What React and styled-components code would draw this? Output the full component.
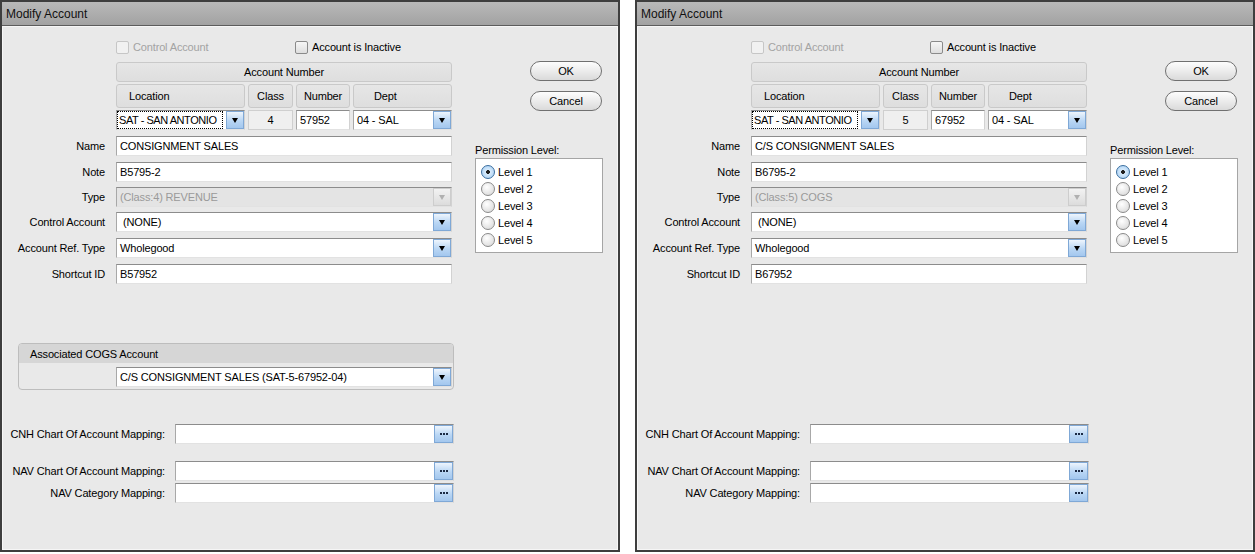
import React from "react";
import styled, { createGlobalStyle } from "styled-components";

const GlobalStyle = createGlobalStyle`
  html, body {
    margin: 0;
    padding: 0;
    background: #ffffff;
  }
  body {
    font-family: "Liberation Sans", Arial, sans-serif;
    font-size: 11px;
    letter-spacing: -0.15px;
    color: #000000;
  }
`;

const Page = styled.div`
  display: flex;
  gap: 15px;
  width: 1255px;
  height: 554px;
`;

const Window = styled.div`
  width: 620px;
  height: 552px;
  box-sizing: border-box;
  border: 2px solid #3e3e3e;
  display: flex;
  flex-direction: column;
  background: #e9e9e9;
`;

const TitleBar = styled.div`
  height: 23px;
  border-bottom: 1px solid #5c5c5c;
  background: linear-gradient(#b9b9b9, #a2a2a2);
  display: flex;
  align-items: center;
  padding-left: 4px;
  font-size: 12px;
  letter-spacing: 0;
  color: #111111;
`;

const Body = styled.div`
  flex: 1;
  display: flex;
  flex-direction: column;
  padding-top: 14px;
  box-shadow: inset 1px 1px 0 #f6f6f6, inset -1px -1px 0 #f6f6f6;
`;

const TopArea = styled.div`
  display: flex;
  align-items: flex-start;
`;

const FormCol = styled.div`
  display: flex;
  flex-direction: column;
  width: 450px;
`;

const FieldRow = styled.div`
  display: grid;
  grid-template-columns: 103px 336px;
  column-gap: 11px;
  align-items: center;
  margin-top: ${(p) => p.$gap || 0}px;
`;

const Label = styled.div`
  text-align: right;
  white-space: nowrap;
`;

const CheckGroup = styled.div`
  display: flex;
  align-items: center;
  height: 14px;
`;

const CheckItem = styled.div`
  display: flex;
  align-items: center;
  gap: 4px;
  width: ${(p) => (p.$width ? `${p.$width}px` : "auto")};
  color: ${(p) => (p.$disabled ? "#a3a3a3" : "#000000")};
`;

const CheckBox = styled.span`
  width: 11px;
  height: 11px;
  border: 1px solid ${(p) => (p.$disabled ? "#c6c6c6" : "#8a8a8a")};
  border-radius: 2px;
  background: ${(p) =>
    p.$disabled ? "#f1f1f1" : "linear-gradient(#f6f6f6, #dedede)"};
`;

const HeaderGrid = styled.div`
  display: grid;
  grid-template-columns: 129px 45px 54px 1fr;
  column-gap: 3px;
`;

const HeaderCell = styled.div`
  height: ${(p) => p.$h || 24}px;
  box-sizing: border-box;
  border: 1px solid #c9c9c9;
  border-radius: 3px;
  background: linear-gradient(#e6e6e6, #dedede);
  display: flex;
  align-items: center;
  justify-content: ${(p) => (p.$left ? "flex-start" : "center")};
  padding-left: ${(p) => p.$left || 0}px;
`;

const Box = styled.div`
  height: 20px;
  box-sizing: border-box;
  border: 1px solid;
  border-color: #8c8c8c #d2d2d2 #e2e2e2 #a8a8a8;
  background: ${(p) => (p.$disabled ? "#e4e4e4" : "#ffffff")};
  color: ${(p) => (p.$disabled ? "#9a9a9a" : "#000000")};
  display: flex;
  align-items: stretch;
`;

const BoxText = styled.div`
  flex: 1;
  display: flex;
  align-items: center;
  padding-left: ${(p) => (p.$indent != null ? p.$indent : 3)}px;
  white-space: nowrap;
  overflow: hidden;
`;

const FocusText = styled.div`
  flex: 1;
  display: flex;
  align-items: center;
  padding-left: 1px;
  margin-right: 3px;
  border: 1px dotted #000000;
  white-space: nowrap;
  overflow: hidden;
  letter-spacing: -0.45px;
`;

const ClassCell = styled.div`
  height: 20px;
  box-sizing: border-box;
  border: 1px solid #cfcfcf;
  background: #efefef;
  display: flex;
  align-items: center;
  justify-content: center;
`;

const DropBtn = styled.div`
  width: 18px;
  box-sizing: border-box;
  border: 1px solid ${(p) => (p.$disabled ? "#cdcdcd" : "#7fa8d6")};
  background: ${(p) =>
    p.$disabled
      ? "linear-gradient(#f2f2f2, #dcdcdc)"
      : "linear-gradient(#eef5fd, #b9d6f4 55%, #a3c7ee)"};
  display: flex;
  align-items: center;
  justify-content: center;
  &::after {
    content: "";
    width: 0;
    height: 0;
    border-left: 3.5px solid transparent;
    border-right: 3.5px solid transparent;
    border-top: 5px solid ${(p) => (p.$disabled ? "#b0b0b0" : "#000000")};
  }
`;

const DotsBtn = styled.div`
  width: 19px;
  box-sizing: border-box;
  border: 1px solid #7fa8d6;
  background: linear-gradient(#eef5fd, #b9d6f4 55%, #a3c7ee);
  display: flex;
  align-items: center;
  justify-content: center;
  gap: 1px;
`;

const Dot = styled.span`
  width: 2px;
  height: 2px;
  background: #1b2a44;
`;

const SideCol = styled.div`
  display: flex;
  flex-direction: column;
  margin-left: 23px;
  width: 128px;
`;

const PillButton = styled.div`
  width: 72px;
  height: 20px;
  box-sizing: border-box;
  margin-left: 55px;
  margin-top: ${(p) => p.$gap}px;
  border: 1px solid #707070;
  border-radius: 10px;
  background: linear-gradient(#fdfdfd, #ececec 50%, #dadada);
  display: flex;
  align-items: center;
  justify-content: center;
`;

const PermLabel = styled.div`
  margin-top: 33px;
  line-height: 13px;
`;

const PermBox = styled.div`
  margin-top: 1px;
  height: 95px;
  box-sizing: border-box;
  border: 1px solid #a5a5a5;
  background: #ffffff;
  padding: 6px 0 0 5px;
  display: flex;
  flex-direction: column;
  gap: 3px;
`;

const RadioRow = styled.div`
  display: flex;
  align-items: center;
  gap: 3px;
  height: 14px;
`;

const Radio = styled.span`
  width: 12px;
  height: 12px;
  border-radius: 50%;
  border: 1px solid ${(p) => (p.$on ? "#3a6e9e" : "#8a8a8a")};
  background: ${(p) =>
    p.$on
      ? "radial-gradient(circle, #1f1f1f 0 1.6px, #d8ebfb 2.2px, #9fcaf2 100%)"
      : "radial-gradient(circle at 40% 35%, #ffffff, #d4d4d4)"};
`;

const CogsSlot = styled.div`
  margin-top: 59px;
  height: 47px;
  padding-left: 16px;
`;

const CogsGroup = styled.div`
  width: 436px;
  height: 47px;
  box-sizing: border-box;
  border: 1px solid #bdbdbd;
  border-radius: 4px;
  overflow: hidden;
`;

const CogsHeader = styled.div`
  height: 19px;
  background: #d6d6d6;
  display: flex;
  align-items: center;
  padding-left: 11px;
`;

const CogsBody = styled.div`
  padding: 4px 0 0 97px;
  width: 336px;
`;

const MapList = styled.div`
  margin-top: 34px;
  display: flex;
  flex-direction: column;
`;

const MapRow = styled.div`
  display: grid;
  grid-template-columns: 163px 279px;
  column-gap: 10px;
  align-items: center;
  margin-top: ${(p) => p.$gap || 0}px;
`;

const Combo = ({ text, disabled, indent }) => (
  <Box $disabled={disabled}>
    <BoxText $indent={indent}>{text}</BoxText>
    <DropBtn $disabled={disabled} />
  </Box>
);

const MapField = () => (
  <Box>
    <BoxText />
    <DotsBtn>
      <Dot />
      <Dot />
      <Dot />
    </DotsBtn>
  </Box>
);

const accounts = [
  {
    cls: "4",
    number: "57952",
    name: "CONSIGNMENT SALES",
    note: "B5795-2",
    type: "(Class:4) REVENUE",
    shortcut: "B57952",
    cogs: "C/S CONSIGNMENT SALES (SAT-5-67952-04)",
  },
  {
    cls: "5",
    number: "67952",
    name: "C/S CONSIGNMENT SALES",
    note: "B6795-2",
    type: "(Class:5) COGS",
    shortcut: "B67952",
    cogs: null,
  },
];

const levels = ["Level 1", "Level 2", "Level 3", "Level 4", "Level 5"];

function AccountWindow({ acct }) {
  return (
    <Window>
      <TitleBar>Modify Account</TitleBar>
      <Body>
        <TopArea>
          <FormCol>
            <FieldRow>
              <Label />
              <CheckGroup>
                <CheckItem $width={179} $disabled>
                  <CheckBox $disabled />
                  Control Account
                </CheckItem>
                <CheckItem>
                  <CheckBox />
                  Account is Inactive
                </CheckItem>
              </CheckGroup>
            </FieldRow>
            <FieldRow $gap={8}>
              <Label />
              <HeaderCell $h={20}>Account Number</HeaderCell>
            </FieldRow>
            <FieldRow $gap={2}>
              <Label />
              <HeaderGrid>
                <HeaderCell $left={12}>Location</HeaderCell>
                <HeaderCell>Class</HeaderCell>
                <HeaderCell>Number</HeaderCell>
                <HeaderCell $left={20}>Dept</HeaderCell>
              </HeaderGrid>
            </FieldRow>
            <FieldRow $gap={2}>
              <Label />
              <HeaderGrid>
                <Box>
                  <FocusText>SAT - SAN ANTONIO</FocusText>
                  <DropBtn />
                </Box>
                <ClassCell>{acct.cls}</ClassCell>
                <Box>
                  <BoxText>{acct.number}</BoxText>
                </Box>
                <Combo text="04 - SAL" />
              </HeaderGrid>
            </FieldRow>
            <FieldRow $gap={6}>
              <Label>Name</Label>
              <Box>
                <BoxText>{acct.name}</BoxText>
              </Box>
            </FieldRow>
            <FieldRow $gap={6}>
              <Label>Note</Label>
              <Box>
                <BoxText>{acct.note}</BoxText>
              </Box>
            </FieldRow>
            <FieldRow $gap={5}>
              <Label>Type</Label>
              <Combo text={acct.type} disabled />
            </FieldRow>
            <FieldRow $gap={5}>
              <Label>Control Account</Label>
              <Combo text="(NONE)" indent={6} />
            </FieldRow>
            <FieldRow $gap={6}>
              <Label>Account Ref. Type</Label>
              <Combo text="Wholegood" />
            </FieldRow>
            <FieldRow $gap={6}>
              <Label>Shortcut ID</Label>
              <Box>
                <BoxText>{acct.shortcut}</BoxText>
              </Box>
            </FieldRow>
          </FormCol>
          <SideCol>
            <PillButton $gap={21}>OK</PillButton>
            <PillButton $gap={10}>Cancel</PillButton>
            <PermLabel>Permission Level:</PermLabel>
            <PermBox>
              {levels.map((lv, i) => (
                <RadioRow key={lv}>
                  <Radio $on={i === 0} />
                  {lv}
                </RadioRow>
              ))}
            </PermBox>
          </SideCol>
        </TopArea>
        <CogsSlot>
          {acct.cogs && (
            <CogsGroup>
              <CogsHeader>Associated COGS Account</CogsHeader>
              <CogsBody>
                <Combo text={acct.cogs} />
              </CogsBody>
            </CogsGroup>
          )}
        </CogsSlot>
        <MapList>
          <MapRow>
            <Label>CNH Chart Of Account Mapping:</Label>
            <MapField />
          </MapRow>
          <MapRow $gap={17}>
            <Label>NAV Chart Of Account Mapping:</Label>
            <MapField />
          </MapRow>
          <MapRow $gap={2}>
            <Label>NAV Category Mapping:</Label>
            <MapField />
          </MapRow>
        </MapList>
      </Body>
    </Window>
  );
}

export default function App() {
  return (
    <>
      <GlobalStyle />
      <Page>
        {accounts.map((a) => (
          <AccountWindow key={a.number} acct={a} />
        ))}
      </Page>
    </>
  );
}
